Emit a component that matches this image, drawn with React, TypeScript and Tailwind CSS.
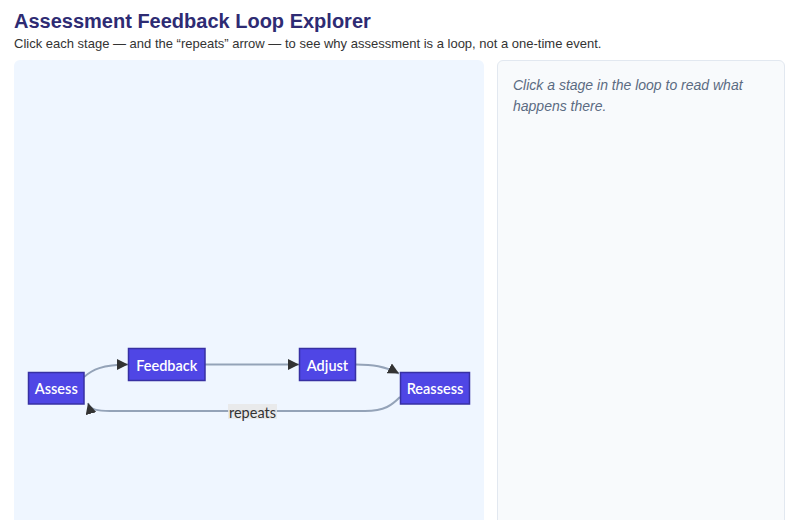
import React from "react";

type Stage = { id: string; label: string; x: number; y: number; w: number; h: number };

// loop stages, laid out left to right in page coordinates
const stages: Stage[] = [
  { id: "assess", label: "Assess", x: 28.5, y: 372.5, w: 55.5, h: 31.5 },
  { id: "feedback", label: "Feedback", x: 128.5, y: 348.5, w: 76.5, h: 32 },
  { id: "adjust", label: "Adjust", x: 299.5, y: 348.5, w: 56, h: 32 },
  { id: "reassess", label: "Reassess", x: 400.5, y: 372.5, w: 69, h: 31.5 }
];

const edge = { stroke: "#94a3b8", strokeWidth: 2, fill: "none", markerEnd: "url(#loop-arrow)" };
const nodeFont = "Lato, sans-serif";

function LoopDiagram() {
  return (
    <svg width={456} height={90} viewBox="21 340 456 90" className="block">
      <defs>
        <marker
          id="loop-arrow"
          viewBox="0 0 10 10"
          refX={10}
          refY={5}
          markerWidth={11}
          markerHeight={11}
          markerUnits="userSpaceOnUse"
          orient="auto"
        >
          <path d="M0,0 L10,5 L0,10 z" fill="#333333" />
        </marker>
      </defs>

      <path d="M84 377 C 92 370, 102 364.5, 128 364.5" {...edge} />
      <path d="M205 364.5 L 299 364.5" {...edge} />
      <path d="M356 364.5 C 372 364.5, 385 366, 399 373.5" {...edge} />
      <path d="M400 397 C 392 405, 385 411, 365 411 L 110 411 C 98 411, 90 410, 88 403" {...edge} />

      <rect x={228} y={404} width={49} height={15} fill="#e8e8e8" opacity={0.85} />
      <text
        x={252.5}
        y={412}
        textAnchor="middle"
        dominantBaseline="central"
        fill="#333333"
        fontSize={14.5}
        fontFamily={nodeFont}
      >
        repeats
      </text>

      {stages.map((s) => (
        <g key={s.id} className="cursor-pointer">
          <rect x={s.x} y={s.y} width={s.w} height={s.h} fill="#4f46e5" stroke="#3730a3" strokeWidth={1.5} />
          <text
            x={s.x + s.w / 2}
            y={s.y + s.h / 2 + 0.5}
            textAnchor="middle"
            dominantBaseline="central"
            fill="#ffffff"
            fontSize={14.5}
            fontWeight={600}
            fontFamily={nodeFont}
          >
            {s.label}
          </text>
        </g>
      ))}
    </svg>
  );
}

export default function App() {
  return (
    <div className="px-[14px] pt-[7px] font-['Liberation_Sans',Arial,sans-serif] bg-white">
      <h1 className="text-[20px] leading-[28px] font-bold text-[#2e2b73]">Assessment Feedback Loop Explorer</h1>
      <p className="text-[13px] leading-[18px] text-[#333333]">
        Click each stage — and the “repeats” arrow — to see why assessment is a loop, not a one-time event.
      </p>

      <div className="mt-[7px] flex gap-[13px]">
        <div className="w-[470px] h-[640px] shrink-0 rounded-md bg-[#eff6ff] pt-[280px] pl-[7px]">
          <LoopDiagram />
        </div>
        <div className="w-[288px] h-[640px] shrink-0 rounded-md border border-[#e2e8f0] bg-[#f8fafc] px-[15px] py-[14px]">
          <p className="text-[14px] leading-[21px] italic text-[#5b6b82]">
            Click a stage in the loop to read what happens there.
          </p>
        </div>
      </div>
    </div>
  );
}
